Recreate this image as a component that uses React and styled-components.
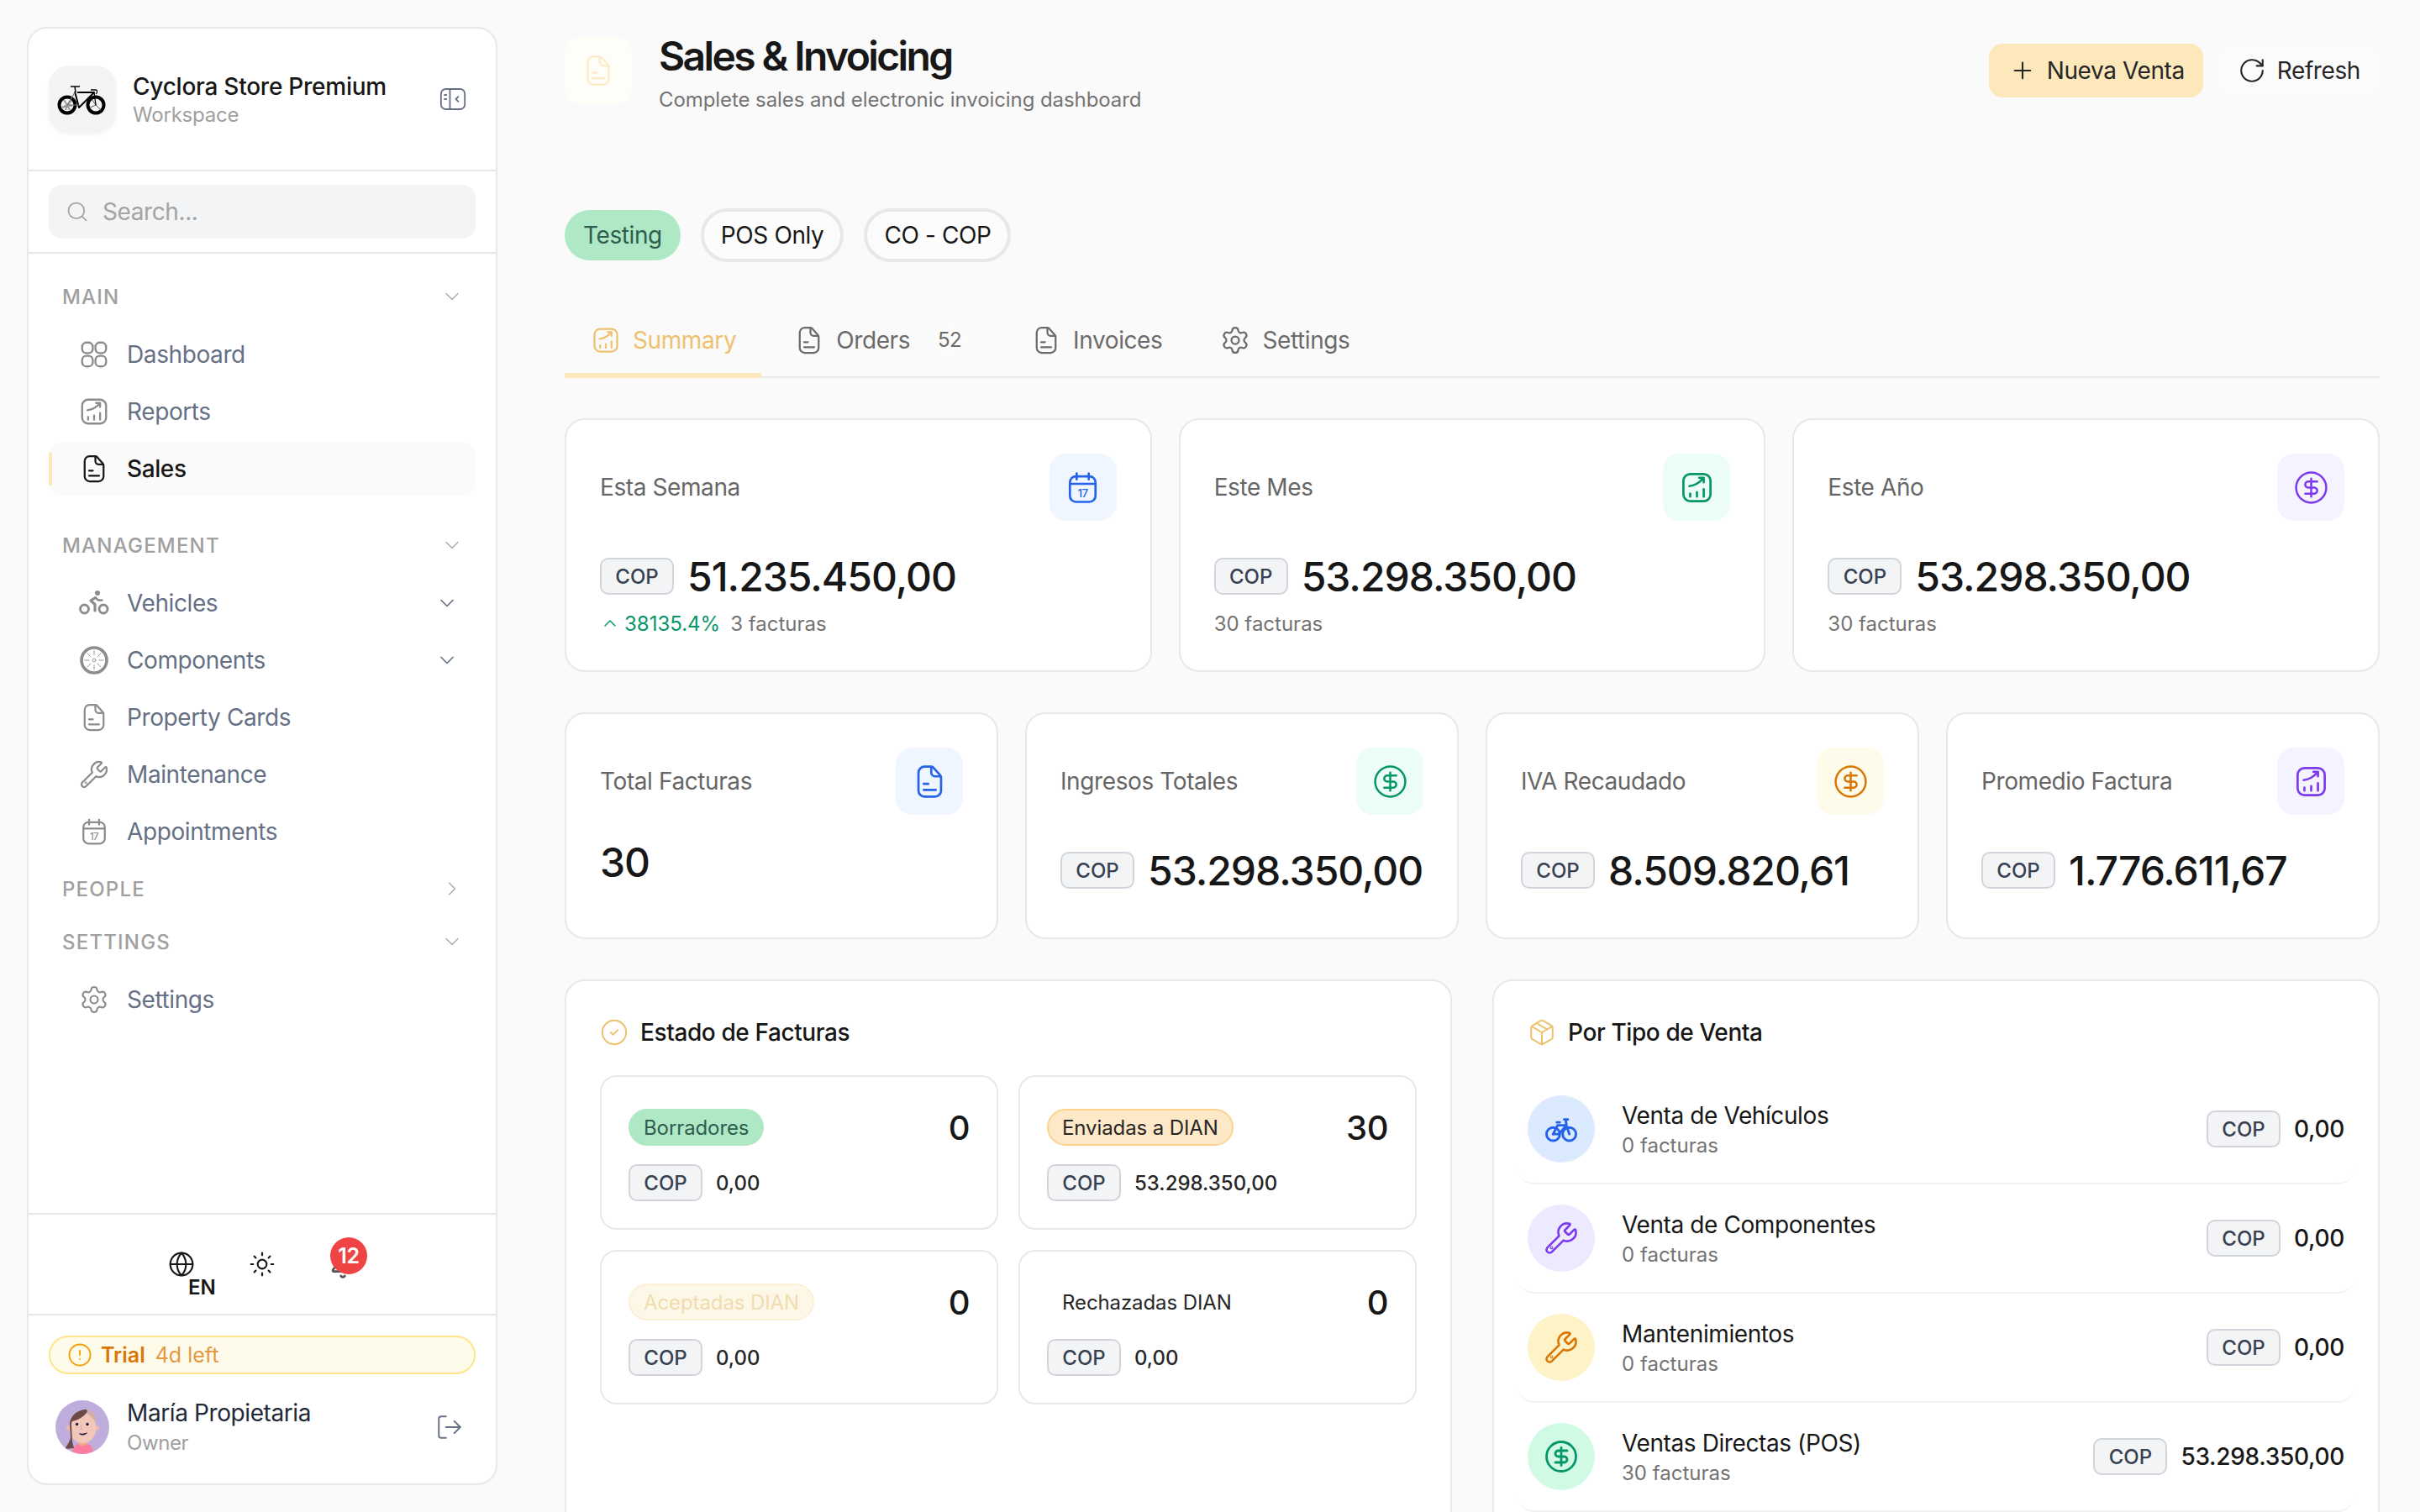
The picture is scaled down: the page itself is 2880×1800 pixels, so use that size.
import React from "react";
import styled, { createGlobalStyle } from "styled-components";
import {
  Bell,
  ChevronDown,
  ChevronRight,
  ChevronUp,
  CircleAlert,
  CircleCheck,
  CircleDollarSign,
  Globe,
  LogOut,
  Package,
  Plus,
  RotateCw,
  Search,
  Settings,
  Sun,
} from "lucide-react";

const GlobalStyle = createGlobalStyle`
  * { box-sizing: border-box; }
  html, body { margin: 0; padding: 0; height: 100%; }
  body {
    background: #fafafa;
    color: #171717;
    font-family: Inter, "Liberation Sans", sans-serif;
    letter-spacing: -0.4px;
    overflow: hidden;
  }
`;

// icons that the packages don't have in this shape
const Svg = ({ size = 36, children, ...rest }) => (
  <svg
    width={size}
    height={size}
    viewBox="0 0 24 24"
    fill="none"
    stroke="currentColor"
    strokeWidth="1.5"
    strokeLinecap="round"
    strokeLinejoin="round"
    {...rest}
  >
    {children}
  </svg>
);

const FileIcon = ({ size }) => (
  <Svg size={size}>
    <path d="M4.5 6a4 4 0 0 1 4-4h4.3c.6 0 1.1.2 1.5.6l4.6 5.2c.4.4.6.9.6 1.4V18a4 4 0 0 1-4 4h-7a4 4 0 0 1-4-4z" />
    <path d="M13 2.5V6a2.5 2.5 0 0 0 2.5 2.5h3.5" />
    <path d="M8 13.5h3M8 17.5h8" />
  </Svg>
);

const ChartIcon = ({ size }) => (
  <Svg size={size}>
    <rect x="3" y="3" width="18" height="18" rx="4.5" />
    <path d="M7 11c3.500-.5 6.500-2 9-5M13.500 5.500h3v3" />
    <path d="M7.500 18v-2M12 18v-3M16.500 18v-5" />
  </Svg>
);

const GridIcon = ({ size }) => (
  <Svg size={size}>
    <rect x="3" y="3" width="8" height="8" rx="3.200" />
    <rect x="13" y="3" width="8" height="8" rx="3.200" />
    <rect x="3" y="13" width="8" height="8" rx="3.200" />
    <rect x="13" y="13" width="8" height="8" rx="3.200" />
  </Svg>
);

const CalendarIcon = ({ size }) => (
  <Svg size={size}>
    <rect x="3.500" y="4.500" width="17" height="17" rx="4" />
    <path d="M3.500 9.500h17M8 2.500v4M16 2.500v4" />
    <text
      x="12"
      y="18.500"
      textAnchor="middle"
      fontSize="7.500"
      fontWeight="500"
      stroke="none"
      fill="currentColor"
      fontFamily="Inter, sans-serif"
    >
      17
    </text>
  </Svg>
);

const WheelIcon = ({ size }) => (
  <Svg size={size}>
    <circle cx="12" cy="12" r="10" strokeWidth="2.400" />
    <circle cx="12" cy="12" r="1.300" strokeWidth="0.600" />
    <path
      strokeWidth="0.600"
      d="M12 8V4.500M12 16v3.500M8 12H4.500M16 12h3.500M9.200 9.200 6.700 6.700M14.800 14.800l2.500 2.500M14.800 9.200l2.500-2.500M9.200 14.800l-2.500 2.500"
    />
  </Svg>
);

const RiderIcon = () => (
  <svg width="36" height="36" viewBox="0 0 36 36" fill="none" stroke="currentColor" strokeLinecap="round" strokeLinejoin="round">
    <circle cx="6.500" cy="25" r="5" strokeWidth="2.800" />
    <circle cx="29" cy="25" r="5" strokeWidth="2.800" />
    <circle cx="22" cy="6" r="3" fill="currentColor" stroke="none" />
    <path d="M19.500 11.500 14 15l5 4.500V27" strokeWidth="3.200" />
    <path d="M19.500 11.500l3.500 3h4.500" strokeWidth="2.400" />
  </svg>
);

const WrenchIcon = ({ size }) => (
  <Svg size={size} strokeWidth="1.500">
    <path d="M14.700 6.300a1 1 0 0 0 0 1.400l1.600 1.600a1 1 0 0 0 1.400 0l3.106-3.105c.32-.322.863-.22.983.218a6 6 0 0 1-8.259 7.057l-7.910 7.910a1 1 0 0 1-2.999-3l7.910-7.910a6 6 0 0 1 7.057-8.259c.438.12.54.662.219.984z" />
    <circle cx="5.500" cy="18.500" r="0.300" />
  </Svg>
);

const BicycleIcon = ({ size }) => (
  <Svg size={size} strokeWidth="1.700">
    <circle cx="6.500" cy="15.500" r="4.500" />
    <circle cx="17.500" cy="15.500" r="4.500" />
    <path d="M6.500 15.500 9.500 9.500h6l2 6M10.500 15.500l5-6M9 7.500h2M15 5.500l.5 4M14 5.500h2.500" />
    <path d="M6.500 15.500h4" />
  </Svg>
);

const PanelIcon = () => (
  <Svg size={34} strokeWidth="1.300">
    <rect x="2" y="3.500" width="20" height="17" rx="4" />
    <path d="M9.500 3.500v17M5 8.500h1.500M5 12h1.500M16.500 10l-2 2 2 2" />
  </Svg>
);

const BikeLogo = () => (
  <svg width="60" height="40" viewBox="0 0 60 40" fill="none">
    <circle cx="12" cy="27" r="9.500" stroke="#000" strokeWidth="4" />
    <circle cx="46" cy="27" r="9.500" stroke="#000" strokeWidth="4" />
    <path d="M12 27 8 21M12 27l5-5M12 27l-6 3M12 27l3 6M12 27l-2 6M12 27l6 1" stroke="#999" strokeWidth="2" />
    <path d="M46 27l-5-7M46 27l6 6M46 27l-7 3" stroke="#555" strokeWidth="1" />
    <path d="M21 11 26 30 44 12H24" stroke="#000" strokeWidth="2" strokeLinejoin="round" />
    <path d="M12 27 21 12M12 27h14" stroke="#777" strokeWidth="1.200" />
    <path d="M16 5h11M21 5l1 7" stroke="#000" strokeWidth="1.500" />
    <path d="M44 12l2 15M40 9h6c2 0 2 4 0 5" stroke="#000" strokeWidth="1.300" fill="none" />
  </svg>
);

const Avatar = () => (
  <svg width="64" height="64" viewBox="0 0 64 64">
    <clipPath id="avatarClip">
      <circle cx="32" cy="32" r="32" />
    </clipPath>
    <circle cx="32" cy="32" r="32" fill="#bfaedd" />
    <g clipPath="url(#avatarClip)">
      <path d="M20 64c0-9 4-13 13-13s12 5 12 13z" fill="#fb7da0" />
      <path d="M27 44h11v8c-3 3-8 3-11 0z" fill="#efa98f" />
      <circle cx="16" cy="33" r="3" fill="#efb9ab" />
      <circle cx="49" cy="33" r="3" fill="#efb9ab" />
      <ellipse cx="32.500" cy="33" rx="16" ry="18" fill="#f3c6ba" />
      <path d="M38 11c6 1 10 7 10 14-4-2-8-8-10-14z" fill="#d6ae9f" />
      <path d="M11 58c3-5 6-9 7-13l-1-16c0-10 9-18 20-18l1 2c-3 6-10 10-18 12-1 1-1 3-1 4l1 20 2 8z" fill="#6d4a45" />
      <circle cx="25.600" cy="28.500" r="1.700" fill="#231a44" />
      <circle cx="38" cy="28.500" r="1.700" fill="#231a44" />
      <path d="M28 39c3 1 7 1 10-1-1 4-8 5-10 1z" fill="#231a44" />
      <path d="M31 29c-1 3-1 5 1 6" stroke="#dfa898" strokeWidth="1" fill="none" />
    </g>
  </svg>
);

const Page = styled.div`
  display: flex;
  width: 100%;
  height: 100vh;
  overflow: hidden;
  background: #fafafa;
`;

const Sidebar = styled.aside`
  flex: 0 0 560px;
  display: flex;
  flex-direction: column;
  height: 1736px;
  margin: 32px 0 0 32px;
  background: #fff;
  border: 2px solid #e8e8e8;
  border-radius: 24px;
  overflow: hidden;
`;

const Brand = styled.div`
  display: flex;
  align-items: center;
  height: 170px;
  padding: 0 24px;
  border-bottom: 2px solid #e8e8e8;
`;

const LogoBox = styled.div`
  display: flex;
  align-items: center;
  justify-content: center;
  width: 80px;
  height: 80px;
  border-radius: 24px;
  background: #f3f4f6;
  box-shadow: 0 2px 4px rgba(0, 0, 0, 0.05);
`;

const BrandText = styled.div`
  flex: 1;
  margin-left: 20px;
`;

const BrandName = styled.div`
  font-size: 28px;
  font-weight: 500;
  line-height: 36px;
  letter-spacing: -0.25px;
  color: #171717;
`;

const BrandSub = styled.div`
  margin-top: 1px;
  font-size: 24px;
  line-height: 30px;
  letter-spacing: -0.2px;
  color: #a0a0a0;
`;

const PanelButton = styled.div`
  display: flex;
  margin-right: 10px;
  color: #667085;
`;

const SearchWrap = styled.div`
  padding: 16px 24px;
  border-bottom: 2px solid #e8e8e8;
`;

const SearchBox = styled.div`
  display: flex;
  align-items: center;
  gap: 16px;
  height: 64px;
  padding: 0 20px;
  border-radius: 16px;
  background: #f3f4f6;
  font-size: 28px;
  color: #a3a3a3;
`;

const Nav = styled.nav`
  flex: 1;
  padding: 0 24px;
`;

const SectionHead = styled.div`
  display: flex;
  align-items: center;
  justify-content: space-between;
  height: 40px;
  margin-top: ${(p) => p.$top}px;
  padding: 0 14px 0 16px;
  font-size: 24px;
  font-weight: 500;
  letter-spacing: 1.2px;
  text-transform: uppercase;
  color: #a0a0a0;
`;

const Rows = styled.div`
  display: flex;
  flex-direction: column;
  gap: 4px;
  margin-top: 17px;
`;

const Row = styled.div`
  position: relative;
  display: flex;
  align-items: center;
  gap: 19px;
  height: 64px;
  padding: 0 20px 0 34px;
  border-radius: 16px;
  background: ${(p) => (p.$active ? "#fafafa" : "transparent")};
  font-size: 28px;
  font-weight: ${(p) => (p.$active ? 500 : 400)};
  color: ${(p) => (p.$active ? "#171717" : "#667085")};
`;

const ActiveBar = styled.span`
  position: absolute;
  left: 0;
  top: 12px;
  bottom: 12px;
  width: 4px;
  border-radius: 2px;
  background: #fde8bc;
`;

const RowIcon = styled.span`
  display: flex;
  align-items: center;
  justify-content: center;
  width: 40px;
  height: 40px;
  color: ${(p) => (p.$active ? "#171717" : "#8c8c8c")};
`;

const RowLabel = styled.span`
  flex: 1;
`;

const RowChevron = styled.span`
  display: flex;
  color: #667085;
`;

const Controls = styled.div`
  display: flex;
  align-items: center;
  justify-content: center;
  gap: 64px;
  height: 122px;
  border-top: 2px solid #e8e8e8;
  border-bottom: 2px solid #e8e8e8;
`;

const Control = styled.div`
  position: relative;
  display: flex;
  align-items: center;
  justify-content: center;
  width: 32px;
  height: 32px;
  color: ${(p) => p.$color || "#171717"};
`;

const BellIcon = styled(Bell)`
  flex: none;
  margin-top: 4px;
`;

const LangTag = styled.span`
  position: absolute;
  left: 24px;
  top: 29px;
  font-size: 24px;
  font-weight: 600;
  line-height: 30px;
  letter-spacing: 0;
  color: #171717;
`;

const CountBadge = styled.span`
  position: absolute;
  left: 1px;
  top: -16px;
  display: flex;
  align-items: center;
  justify-content: center;
  width: 44px;
  height: 44px;
  border-radius: 50%;
  background: #ef4444;
  color: #fff;
  font-size: 25px;
  font-weight: 600;
`;

const Account = styled.div`
  padding: 24px 24px 0;
  height: 200px;
`;

const TrialPill = styled.div`
  display: flex;
  align-items: center;
  gap: 10px;
  height: 46px;
  padding: 0 20px;
  border: 2px solid #fde68a;
  border-radius: 23px;
  background: #fffbeb;
  font-size: 25px;
  letter-spacing: 0;
  color: #d97706;
`;

const TrialStrong = styled.span`
  font-weight: 600;
`;

const TrialLeft = styled.span`
  margin-left: 2px;
  opacity: 0.75;
`;

const UserRow = styled.div`
  display: flex;
  align-items: center;
  margin-top: 28px;
  padding-left: 8px;
`;

const UserText = styled.div`
  flex: 1;
  margin-left: 21px;
`;

const UserName = styled.div`
  font-size: 28px;
  line-height: 36px;
  color: #1f2937;
`;

const UserRole = styled.div`
  margin-top: 2px;
  font-size: 24px;
  line-height: 32px;
  color: #a0a0a0;
`;

const Logout = styled.div`
  display: flex;
  margin-right: 14px;
  color: #667085;
`;

const Main = styled.main`
  flex: 1;
  min-width: 0;
  height: 100vh;
  padding: 44px 48px 0;
  margin-left: 32px;
  overflow: hidden;
`;

const Header = styled.header`
  display: flex;
  justify-content: space-between;
  height: 80px;
`;

const HeaderLeft = styled.div`
  display: flex;
  gap: 32px;
`;

const HeaderTile = styled.div`
  display: flex;
  align-items: center;
  justify-content: center;
  width: 80px;
  height: 80px;
  border-radius: 20px;
  background: #fffdf8;
  color: #fdeccb;
`;

const Title = styled.h1`
  margin: 0;
  font-size: 48px;
  font-weight: 600;
  line-height: 46px;
  letter-spacing: -2.6px;
  color: #171717;
`;

const Subtitle = styled.p`
  margin: 11px 0 0;
  font-size: 24px;
  line-height: 36px;
  letter-spacing: -0.08px;
  color: #737373;
`;

const HeaderActions = styled.div`
  display: flex;
  gap: 17px;
  margin-top: 8px;
`;

const ActionButton = styled.button`
  display: flex;
  align-items: center;
  gap: 13px;
  height: 64px;
  padding: 0 ${(p) => (p.$primary ? 22 : 23)}px 0 24px;
  border: none;
  border-radius: 16px;
  background: ${(p) => (p.$primary ? "#fde8bc" : "#fbfbfb")};
  font-family: inherit;
  font-size: 28px;
  letter-spacing: -0.4px;
  color: #262626;
`;

const Chips = styled.div`
  display: flex;
  align-items: center;
  gap: 24px;
  height: 64px;
  margin-top: 124px;
`;

const Chip = styled.span`
  display: flex;
  align-items: center;
  height: ${(p) => (p.$solid ? 60 : 64)}px;
  padding: 0 ${(p) => (p.$solid ? 22 : 20)}px;
  border: ${(p) => (p.$solid ? "none" : "4px solid #e8e8e8")};
  border-radius: 32px;
  background: ${(p) => (p.$solid ? "#aee8c4" : "#fcfcfc")};
  font-size: 28px;
  color: ${(p) => (p.$solid ? "#2f5d50" : "#171717")};
`;

const TabBar = styled.div`
  display: flex;
  gap: 8px;
  height: 90px;
  margin-top: 48px;
  border-bottom: 2px solid #e8e8e8;
`;

const Tab = styled.div`
  display: flex;
  align-items: center;
  gap: 14px;
  height: 90px;
  padding: 5px 30px 0 31px;
  border-bottom: 6px solid ${(p) => (p.$active ? "#fde8bc" : "transparent")};
  font-size: 28px;
  color: ${(p) => (p.$active ? "#eec16f" : "#6b6b6b")};
`;

const TabCount = styled.span`
  display: flex;
  align-items: center;
  justify-content: center;
  width: 44px;
  height: 44px;
  margin: 0 6px 0 11px;
  border-radius: 50%;
  background: #fbfbfb;
  font-size: 24px;
`;

const StatRow = styled.div`
  display: grid;
  grid-template-columns: repeat(${(p) => p.$cols}, 1fr);
  gap: 32px;
  margin-top: 48px;
`;

const StatCard = styled.div`
  min-height: ${(p) => (p.$tall ? 302 : 270)}px;
  padding: 40px;
  background: #fff;
  border: 2px solid #e8e8e8;
  border-radius: 24px;
`;

const StatTop = styled.div`
  display: flex;
  align-items: center;
  justify-content: space-between;
`;

const StatLabel = styled.span`
  font-size: 28px;
  color: #666;
`;

const Tile = styled.div`
  display: flex;
  align-items: center;
  justify-content: center;
  width: 80px;
  height: 80px;
  border-radius: 20px;
  background: ${(p) => tones[p.$tone].soft};
  color: ${(p) => tones[p.$tone].fg};
`;

const Money = styled.div`
  display: flex;
  align-items: center;
  gap: 16px;
  height: ${(p) => p.$height || 60}px;
  margin-top: ${(p) => p.$top || 0}px;
`;

const Cop = styled.span`
  display: flex;
  align-items: center;
  justify-content: center;
  width: 88px;
  height: 44px;
  border: 2px solid #d1d5db;
  border-radius: 10px;
  background: #f3f4f6;
  font-size: 24px;
  font-weight: 500;
  letter-spacing: 0;
  color: #374151;
`;

const BigValue = styled.span`
  padding-top: 2px;
  font-size: 48px;
  font-weight: 500;
  line-height: 60px;
  letter-spacing: -1px;
  color: #171717;
`;

const PlainValue = styled.div`
  margin-top: 36px;
  font-size: 48px;
  font-weight: 500;
  line-height: 42px;
  letter-spacing: -1px;
  color: #171717;
`;

const StatNote = styled.div`
  display: flex;
  align-items: center;
  gap: 12px;
  height: 32px;
  margin-top: 10px;
  font-size: 24px;
  letter-spacing: 0;
  color: #737373;
`;

const Trend = styled.span`
  display: flex;
  align-items: center;
  gap: 5px;
  color: #059669;
`;

const Panels = styled.div`
  display: grid;
  grid-template-columns: 1fr 1fr;
  gap: 48px;
  margin-top: 48px;
`;

const Panel = styled.section`
  height: 800px;
  padding: 40px;
  background: #fff;
  border: 2px solid #e8e8e8;
  border-radius: 24px;
`;

const PanelTitle = styled.h2`
  display: flex;
  align-items: center;
  gap: 14px;
  height: 42px;
  margin: 0;
  font-size: 28px;
  font-weight: 500;
  color: #171717;
`;

const PanelIconWrap = styled.span`
  display: flex;
  color: #eec16f;
`;

const StatusGrid = styled.div`
  display: grid;
  grid-template-columns: 1fr 1fr;
  gap: 24px;
  margin-top: 30px;
`;

const StatusCard = styled.div`
  height: 184px;
  padding: 38px 32px 0;
  border: 2px solid #e8e8e8;
  border-radius: 20px;
`;

const StatusTop = styled.div`
  display: flex;
  align-items: center;
  justify-content: space-between;
  height: 44px;
  margin-bottom: 22px;
`;

const StatusPill = styled.span`
  display: flex;
  align-items: center;
  height: 44px;
  padding: 0 16px;
  border: 2px solid ${(p) => pills[p.$kind].border};
  border-radius: 22px;
  background: ${(p) => pills[p.$kind].bg};
  font-size: 24px;
  letter-spacing: -0.1px;
  color: ${(p) => pills[p.$kind].fg};
`;

const StatusCount = styled.span`
  font-size: 40px;
  font-weight: 500;
  letter-spacing: -0.5px;
  color: #171717;
`;

const SmallValue = styled.span`
  font-size: 24px;
  font-weight: 500;
  letter-spacing: 0;
  color: #262626;
`;

const TypeList = styled.div`
  margin: 30px -12px 0;
`;

const TypeRow = styled.div`
  display: flex;
  align-items: center;
  height: 130px;
  padding: 0 12px;
  border-bottom: 2px solid #f3f3f3;
  border-radius: 20px;
`;

const TypeCircle = styled.div`
  display: flex;
  align-items: center;
  justify-content: center;
  width: 80px;
  height: 80px;
  border-radius: 50%;
  background: ${(p) => tones[p.$tone].solid};
  color: ${(p) => tones[p.$tone].fg};
`;

const TypeText = styled.div`
  flex: 1;
  margin-left: 32px;
  padding-top: 2px;
`;

const TypeName = styled.div`
  font-size: 28px;
  line-height: 36px;
  color: #171717;
`;

const TypeSub = styled.div`
  margin-top: 2px;
  font-size: 24px;
  line-height: 32px;
  letter-spacing: 0;
  color: #737373;
`;

const TypeValue = styled.span`
  font-size: 28px;
  font-weight: 500;
  letter-spacing: -0.3px;
  color: #171717;
`;

const tones = {
  blue: { soft: "#eff6ff", solid: "#dbeafe", fg: "#2563eb" },
  green: { soft: "#ecfdf5", solid: "#d1fae5", fg: "#059669" },
  purple: { soft: "#f5f3ff", solid: "#ede9fe", fg: "#7c3aed" },
  amber: { soft: "#fffbeb", solid: "#fef3c7", fg: "#d97706" },
};

const pills = {
  green: { bg: "#aee8c4", border: "#aee8c4", fg: "#2f5d50" },
  orange: { bg: "#fde8c8", border: "#fbd38d", fg: "#262626" },
  faded: { bg: "#fdf7e8", border: "#fbf0d5", fg: "#f0dcae" },
  plain: { bg: "transparent", border: "transparent", fg: "#262626" },
};

const topStats = [
  { label: "Esta Semana", tone: "blue", Icon: CalendarIcon, value: "51.235.450,00", trend: "38135.4%", note: "3 facturas" },
  { label: "Este Mes", tone: "green", Icon: ChartIcon, value: "53.298.350,00", note: "30 facturas" },
  { label: "Este Año", tone: "purple", Icon: CircleDollarSign, value: "53.298.350,00", note: "30 facturas" },
];

const midStats = [
  { label: "Total Facturas", tone: "blue", Icon: FileIcon, plain: "30" },
  { label: "Ingresos Totales", tone: "green", Icon: CircleDollarSign, value: "53.298.350,00" },
  { label: "IVA Recaudado", tone: "amber", Icon: CircleDollarSign, value: "8.509.820,61" },
  { label: "Promedio Factura", tone: "purple", Icon: ChartIcon, value: "1.776.611,67" },
];

const statuses = [
  { label: "Borradores", kind: "green", count: "0", value: "0,00" },
  { label: "Enviadas a DIAN", kind: "orange", count: "30", value: "53.298.350,00" },
  { label: "Aceptadas DIAN", kind: "faded", count: "0", value: "0,00" },
  { label: "Rechazadas DIAN", kind: "plain", count: "0", value: "0,00" },
];

const saleTypes = [
  { name: "Venta de Vehículos", sub: "0 facturas", tone: "blue", Icon: BicycleIcon, value: "0,00" },
  { name: "Venta de Componentes", sub: "0 facturas", tone: "purple", Icon: WrenchIcon, value: "0,00" },
  { name: "Mantenimientos", sub: "0 facturas", tone: "amber", Icon: WrenchIcon, value: "0,00" },
  { name: "Ventas Directas (POS)", sub: "30 facturas", tone: "green", Icon: CircleDollarSign, value: "53.298.350,00" },
];

const thinChevron = { size: 28, strokeWidth: 1.2, color: "#a8a8a8" };

const NavRow = ({ icon, label, active, more }) => (
  <Row $active={active}>
    {active && <ActiveBar />}
    <RowIcon $active={active}>{icon}</RowIcon>
    <RowLabel>{label}</RowLabel>
    {more && (
      <RowChevron>
        <ChevronDown size={28} strokeWidth={1.5} />
      </RowChevron>
    )}
  </Row>
);

const Stat = ({ stat, tall }) => {
  const { label, tone, Icon, value, plain, trend, note } = stat;
  return (
    <StatCard $tall={tall}>
      <StatTop>
        <StatLabel>{label}</StatLabel>
        <Tile $tone={tone}>
          <Icon size={43} strokeWidth={1.4} />
        </Tile>
      </StatTop>
      {plain ? (
        <PlainValue>{plain}</PlainValue>
      ) : (
        <Money $top={36}>
          <Cop>COP</Cop>
          <BigValue>{value}</BigValue>
        </Money>
      )}
      {note && (
        <StatNote>
          {trend && (
            <Trend>
              <ChevronUp size={24} strokeWidth={1.5} />
              {trend}
            </Trend>
          )}
          {note}
        </StatNote>
      )}
    </StatCard>
  );
};

const App = () => {
  return (
    <Page>
      <GlobalStyle />
      <Sidebar>
        <Brand>
          <LogoBox>
            <BikeLogo />
          </LogoBox>
          <BrandText>
            <BrandName>Cyclora Store Premium</BrandName>
            <BrandSub>Workspace</BrandSub>
          </BrandText>
          <PanelButton>
            <PanelIcon />
          </PanelButton>
        </Brand>
        <SearchWrap>
          <SearchBox>
            <Search size={28} strokeWidth={1.5} />
            Search...
          </SearchBox>
        </SearchWrap>
        <Nav>
          <SectionHead $top={31}>
            MAIN
            <ChevronDown {...thinChevron} />
          </SectionHead>
          <Rows>
            <NavRow icon={<GridIcon size={38} />} label="Dashboard" />
            <NavRow icon={<ChartIcon size={38} />} label="Reports" />
            <NavRow icon={<FileIcon size={36} />} label="Sales" active />
          </Rows>
          <SectionHead $top={39}>
            MANAGEMENT
            <ChevronDown {...thinChevron} />
          </SectionHead>
          <Rows>
            <NavRow icon={<RiderIcon />} label="Vehicles" more />
            <NavRow icon={<WheelIcon size={36} />} label="Components" more />
            <NavRow icon={<FileIcon size={36} />} label="Property Cards" />
            <NavRow icon={<WrenchIcon size={36} />} label="Maintenance" />
            <NavRow icon={<CalendarIcon size={36} />} label="Appointments" />
          </Rows>
          <SectionHead $top={16}>
            PEOPLE
            <ChevronRight {...thinChevron} />
          </SectionHead>
          <SectionHead $top={23}>
            SETTINGS
            <ChevronDown {...thinChevron} />
          </SectionHead>
          <Rows>
            <NavRow icon={<Settings size={36} strokeWidth={1.4} />} label="Settings" />
          </Rows>
        </Nav>
        <Controls>
          <Control>
            <Globe size={34} strokeWidth={1.6} />
            <LangTag>EN</LangTag>
          </Control>
          <Control>
            <Sun size={32} strokeWidth={1.6} />
          </Control>
          <Control $color="#525252">
            <BellIcon size={32} strokeWidth={2} />
            <CountBadge>12</CountBadge>
          </Control>
        </Controls>
        <Account>
          <TrialPill>
            <CircleAlert size={30} strokeWidth={1.5} color="#f59e0b" />
            <TrialStrong>Trial</TrialStrong>
            <TrialLeft>4d left</TrialLeft>
          </TrialPill>
          <UserRow>
            <Avatar />
            <UserText>
              <UserName>María Propietaria</UserName>
              <UserRole>Owner</UserRole>
            </UserText>
            <Logout>
              <LogOut size={34} strokeWidth={1.4} />
            </Logout>
          </UserRow>
        </Account>
      </Sidebar>

      <Main>
        <Header>
          <HeaderLeft>
            <HeaderTile>
              <FileIcon size={40} />
            </HeaderTile>
            <div>
              <Title>Sales &amp; Invoicing</Title>
              <Subtitle>Complete sales and electronic invoicing dashboard</Subtitle>
            </div>
          </HeaderLeft>
          <HeaderActions>
            <ActionButton $primary>
              <Plus size={32} strokeWidth={1.6} />
              Nueva Venta
            </ActionButton>
            <ActionButton>
              <RotateCw size={34} strokeWidth={1.5} />
              Refresh
            </ActionButton>
          </HeaderActions>
        </Header>

        <Chips>
          <Chip $solid>Testing</Chip>
          <Chip>POS Only</Chip>
          <Chip>CO - COP</Chip>
        </Chips>

        <TabBar>
          <Tab $active>
            <ChartIcon size={36} />
            Summary
          </Tab>
          <Tab>
            <FileIcon size={36} />
            Orders
            <TabCount>52</TabCount>
          </Tab>
          <Tab>
            <FileIcon size={36} />
            Invoices
          </Tab>
          <Tab>
            <Settings size={36} strokeWidth={1.5} />
            Settings
          </Tab>
        </TabBar>

        <StatRow $cols={3}>
          {topStats.map((s) => (
            <Stat key={s.label} stat={s} tall />
          ))}
        </StatRow>

        <StatRow $cols={4}>
          {midStats.map((s) => (
            <Stat key={s.label} stat={s} />
          ))}
        </StatRow>

        <Panels>
          <Panel>
            <PanelTitle>
              <PanelIconWrap>
                <CircleCheck size={34} strokeWidth={1.4} />
              </PanelIconWrap>
              Estado de Facturas
            </PanelTitle>
            <StatusGrid>
              {statuses.map((s) => (
                <StatusCard key={s.label}>
                  <StatusTop>
                    <StatusPill $kind={s.kind}>{s.label}</StatusPill>
                    <StatusCount>{s.count}</StatusCount>
                  </StatusTop>
                  <Money $height={44}>
                    <Cop>COP</Cop>
                    <SmallValue>{s.value}</SmallValue>
                  </Money>
                </StatusCard>
              ))}
            </StatusGrid>
          </Panel>

          <Panel>
            <PanelTitle>
              <PanelIconWrap>
                <Package size={34} strokeWidth={1.4} />
              </PanelIconWrap>
              Por Tipo de Venta
            </PanelTitle>
            <TypeList>
              {saleTypes.map((t) => (
                <TypeRow key={t.name}>
                  <TypeCircle $tone={t.tone}>
                    <t.Icon size={42} strokeWidth={1.6} />
                  </TypeCircle>
                  <TypeText>
                    <TypeName>{t.name}</TypeName>
                    <TypeSub>{t.sub}</TypeSub>
                  </TypeText>
                  <Money $height={44}>
                    <Cop>COP</Cop>
                    <TypeValue>{t.value}</TypeValue>
                  </Money>
                </TypeRow>
              ))}
            </TypeList>
          </Panel>
        </Panels>
      </Main>
    </Page>
  );
};

export default App;
